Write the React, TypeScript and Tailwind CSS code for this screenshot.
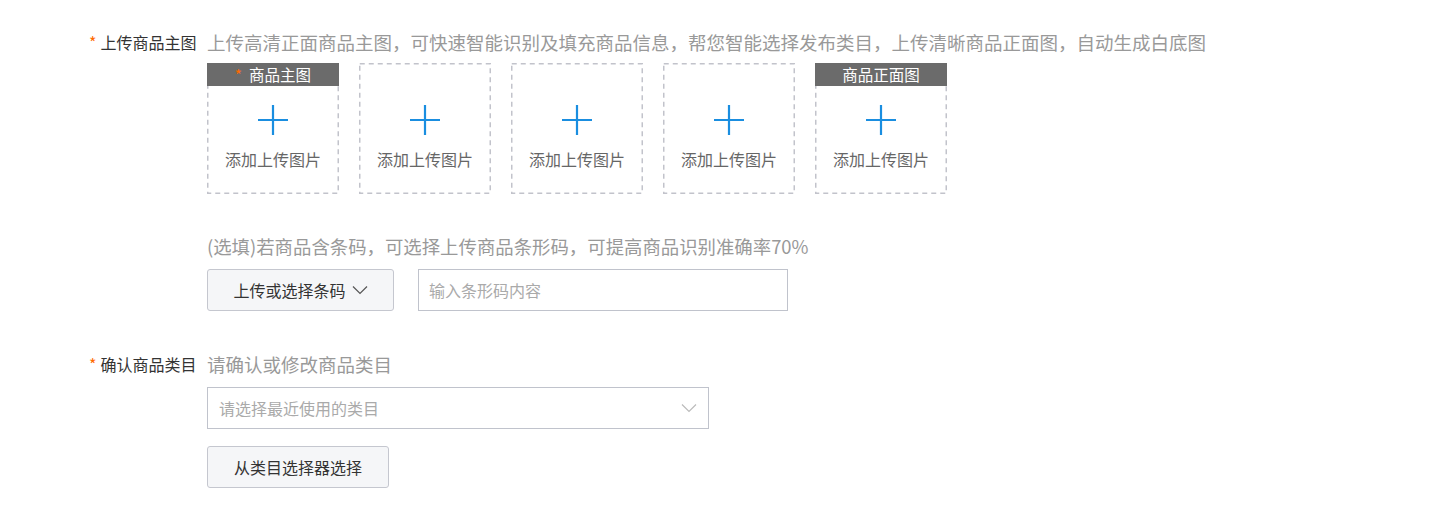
const font = { fontFamily: '"Noto Sans CJK SC", "Noto Sans", sans-serif' };

function Plus() {
  return (
    <svg width="32" height="32" viewBox="0 0 32 32" className="block">
      <path d="M16 1v30M1 16h30" stroke="#1a8ee0" strokeWidth="2.2" fill="none" />
    </svg>
  );
}

function Chevron({ className = "" }: { className?: string }) {
  return (
    <svg width="16" height="10" viewBox="0 0 16 10" className={className}>
      <path d="M1 1.5l7 7 7-7" stroke="currentColor" strokeWidth="1.2" fill="none" />
    </svg>
  );
}

// dashed frame with longer dashes than the css border gives
function DashedFrame() {
  return (
    <svg className="pointer-events-none absolute inset-0 h-full w-full" width="132" height="131">
      <rect x="0.75" y="0.75" width="130.5" height="129.5" fill="none" stroke="#c2c3cb" strokeWidth="1.5" strokeDasharray="5 4" />
    </svg>
  );
}

function UploadBox({ tag, required }: { tag?: string; required?: boolean }) {
  return (
    <div className="relative flex h-[131px] w-[132px] flex-col items-center">
      <DashedFrame />
      {tag && (
        <div className="absolute left-0 right-0 top-0 flex h-[23px] items-center justify-center bg-[#6b6b6b] text-[15.5px] leading-none text-white">
          {required && <span className="mr-[7px] text-[#ff6a00]">*</span>}
          {tag}
        </div>
      )}
      <div className="mt-[41px]">
        <Plus />
      </div>
      <span className="mt-[15px] text-[16px] leading-none text-[#666]">添加上传图片</span>
    </div>
  );
}

function Label({ text }: { text: string }) {
  return (
    <div className="flex w-[118px] shrink-0 items-center pl-[89px] text-[16px] leading-none text-[#333] whitespace-nowrap">
      <span className="mr-[4px] text-[#ff6a00]">*</span>
      {text}
    </div>
  );
}

export default function App() {
  return (
    <div className="h-[511px] w-[1440px] bg-white" style={font}>
      <div className="pt-[31px]">
        <div className="flex items-center">
          <Label text="上传商品主图" />
          <div className="pl-[89px] text-[18.5px] leading-[22px] text-[#999] whitespace-nowrap">
            上传高清正面商品主图，可快速智能识别及填充商品信息，帮您智能选择发布类目，上传清晰商品正面图，自动生成白底图
          </div>
        </div>

        <div className="ml-[207px] mt-[10px] flex gap-[20px]">
          <UploadBox tag="商品主图" required />
          <UploadBox />
          <UploadBox />
          <UploadBox />
          <UploadBox tag="商品正面图" />
        </div>

        <div className="ml-[207px] mt-[41px] text-[18.4px] leading-[22px] text-[#999] whitespace-nowrap">
          (选填)若商品含条码，可选择上传商品条形码，可提高商品识别准确率70%
        </div>

        <div className="ml-[207px] mt-[12px] flex gap-[24px]">
          <button className="flex h-[42px] w-[187px] items-center justify-center gap-[6px] rounded-[3px] border border-[#c5c7cf] bg-[#f5f6f8] text-[16px] text-[#333]">
            上传或选择条码
            <Chevron className="text-[#555]" />
          </button>
          <div className="flex h-[42px] w-[370px] items-center border border-[#c0c3cc] pl-[10px] text-[16px] text-[#aaa]">
            输入条形码内容
          </div>
        </div>

        <div className="mt-[42px] flex items-center">
          <Label text="确认商品类目" />
          <div className="pl-[89px] text-[18.5px] leading-[22px] text-[#999] whitespace-nowrap">请确认或修改商品类目</div>
        </div>

        <div className="ml-[207px] mt-[12px] flex h-[42px] w-[502px] items-center justify-between border border-[#c0c3cc] pl-[11px] pr-[11px] text-[16px] text-[#aaa]">
          请选择最近使用的类目
          <Chevron className="text-[#bbb]" />
        </div>

        <button className="ml-[207px] mt-[17px] flex h-[42px] w-[182px] items-center justify-center rounded-[3px] border border-[#c5c7cf] bg-[#f5f6f8] text-[16px] text-[#333]">
          从类目选择器选择
        </button>
      </div>
    </div>
  );
}
